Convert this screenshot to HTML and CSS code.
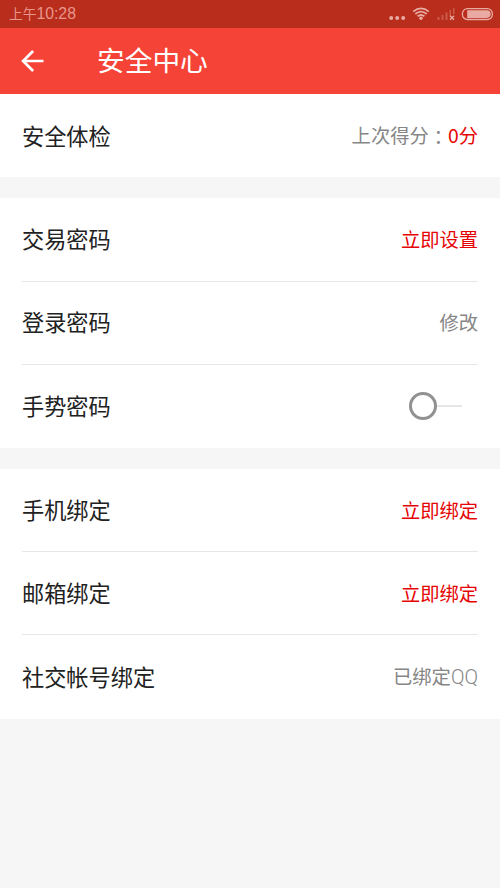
FILE: index.html
```html
<!DOCTYPE html>
<html lang="zh-CN">
<head>
<meta charset="utf-8">
<meta name="viewport" content="width=device-width, initial-scale=1">
<title>安全中心</title>
<link rel="stylesheet" href="styles.css">
</head>
<body>
<div class="status">
  <div class="time">上午<span class="digits">10:28</span></div>
  <svg class="status-icons" width="108" height="28" viewBox="0 0 108 28" fill="none">
    <g fill="#e8aaa2">
      <circle cx="4.200" cy="18" r="2"/><circle cx="10.200" cy="18" r="2"/><circle cx="16.200" cy="18" r="2"/>
      <circle cx="34" cy="18.200" r="1.700"/>
    </g>
    <g stroke="#e8aaa2" stroke-width="1.800">
      <path d="M26.200 11.600Q34 5.200 41.800 11.600"/>
      <path d="M28.300 14Q34 9.300 39.700 14"/>
      <path d="M30.600 16.300Q34 13.600 37.400 16.300"/>
    </g>
    <g fill="#cb5b4b">
      <path d="M50.500 17h2v3h-2zM54.500 15h2v5h-2zM58.500 12.500h2V20h-2zM62.500 10H64v6h-1.500zM66 8h1.500v6H66z"/>
    </g>
    <path d="M63 15.700l4 4M67 15.700l-4 4" stroke="#e8aaa2" stroke-width="1.400"/>
    <rect x="75.400" y="8.700" width="30" height="10.800" rx="5" stroke="#e8aaa2" stroke-width="1.300"/>
    <path d="M80.200 10.300h19.700a3.800 3.800 0 0 1 0 7.600H80.200z" fill="#e8aaa2"/>
  </svg>
</div>
<header class="bar">
  <svg class="back" width="24" height="24" viewBox="0 0 24 24" fill="none" stroke="#fff" stroke-width="2.700">
    <path d="M23.500 12H3.500M13.100 2L3.100 12l10 10"/>
  </svg>
  <h1 class="title">安全中心</h1>
</header>
<main>
  <section class="group">
    <div class="row"><span class="label">安全体检</span><span class="value">上次得分<span class="colon" lang="zh-TW">：</span><span class="alert">0分</span></span></div>
  </section>
  <section class="group">
    <div class="row"><span class="label">交易密码</span><span class="value alert">立即设置</span></div>
    <div class="row"><span class="label">登录密码</span><span class="value">修改</span></div>
    <div class="row"><span class="label">手势密码</span><span class="switch"><span class="knob"></span><span class="track"></span></span></div>
  </section>
  <section class="group">
    <div class="row"><span class="label">手机绑定</span><span class="value alert">立即绑定</span></div>
    <div class="row"><span class="label">邮箱绑定</span><span class="value alert">立即绑定</span></div>
    <div class="row"><span class="label">社交帐号绑定</span><span class="value">已绑定<span class="latin">QQ</span></span></div>
  </section>
</main>
</body>
</html>
```

FILE: styles.css
```css
* { box-sizing: border-box; }
body {
  margin: 0;
  min-height: 888px;
  background: #f6f6f6;
  color: #212121;
  font-family: "Noto Sans CJK SC", sans-serif;
}
.status {
  display: flex;
  justify-content: space-between;
  align-items: center;
  height: 28px;
  padding: 0 5px 0 9px;
  background: #b82d1b;
  color: #e8968b;
}
.time { padding-bottom: 1px; font-size: 13.7px; line-height: 27px; }
.digits { font-family: "Liberation Sans", sans-serif; font-size: 15.8px; }
.status-icons { display: block; }
.bar {
  display: flex;
  align-items: center;
  height: 66.200px;
  padding-left: 20px;
  background: #f64337;
  color: #fff;
}
.back { margin-right: 53px; }
.title { margin: 0; padding-bottom: 3px; font-size: 27.7px; font-weight: 400; line-height: 63px; }
.group { margin-bottom: 21px; padding: 0 22px; background: #fff; }
.row {
  display: flex;
  justify-content: space-between;
  align-items: center;
  height: 83.2px;
  font-size: 22.2px;
  line-height: 32px;
}
.row:not(:last-child) { border-bottom: 1px solid #e6e6e6; }
.label { padding-bottom: 2.500px; }
.value { padding-bottom: 1px; color: #868686; font-size: 19.3px; }
.colon { position: relative; top: 2px; font-family: "Noto Sans CJK TC", sans-serif; }
.latin { font-family: Roboto, sans-serif; font-size: 20px; font-weight: 300; }
.alert { color: #e60505; }
.switch { display: flex; align-items: center; margin-right: 16px; }
.knob { width: 28px; height: 28px; border: 3px solid #919191; border-radius: 50%; }
.track { width: 25px; height: 2px; background: #e6e6e6; }
```
